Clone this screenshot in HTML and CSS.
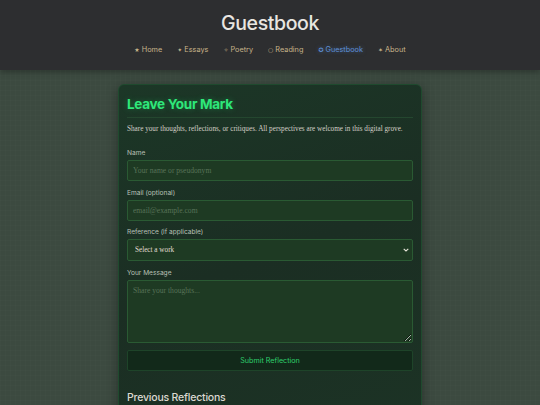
FILE: index.html
```html
<!DOCTYPE html>
<html>
<head>
<meta charset="utf-8">
<link rel="stylesheet" href="styles.css">
</head>
<body>
<header class="site-header">
  <h1 class="site-title">Guestbook</h1>
  <nav class="nav">
    <a class="nav-link"><span class="glyph">★</span> Home</a>
    <a class="nav-link"><span class="glyph">✦</span> Essays</a>
    <a class="nav-link"><span class="glyph">✧</span> Poetry</a>
    <a class="nav-link"><span class="glyph">○</span> Reading</a>
    <a class="nav-link active"><span class="glyph">✪</span> Guestbook</a>
    <a class="nav-link"><span class="glyph">✶</span> About</a>
  </nav>
</header>
<main class="main">
  <section class="card">
    <h2 class="card-title">Leave Your Mark</h2>
    <p class="intro">Share your thoughts, reflections, or critiques. All perspectives are welcome in this digital grove.</p>
    <form class="form">
      <label class="field">
        <span class="label">Name</span>
        <input class="input" type="text" placeholder="Your name or pseudonym">
      </label>
      <label class="field">
        <span class="label">Email (optional)</span>
        <input class="input" type="text" placeholder="email@example.com">
      </label>
      <label class="field">
        <span class="label">Reference (if applicable)</span>
        <span class="select-wrap">
          <select class="input select"><option>Select a work</option></select>
          <svg class="select-arrow" width="6" height="4" viewBox="0 0 6 4"><path d="M0.7 0.8 L3 3 L5.3 0.8" fill="none" stroke="#e6e3d8" stroke-width="1.1"/></svg>
        </span>
      </label>
      <label class="field">
        <span class="label">Your Message</span>
        <textarea class="input textarea" placeholder="Share your thoughts..."></textarea>
      </label>
      <button class="submit" type="button">Submit Reflection</button>
    </form>
    <h2 class="prev-title">Previous Reflections</h2>
  </section>
</main>
</body>
</html>
```

FILE: styles.css
```css
html, body {
  margin: 0;
  padding: 0;
}
body {
  width: 540px;
  height: 405px;
  overflow: hidden;
  font-family: "Inter", "DejaVu Sans", sans-serif;
  background-color: #3c4a40;
  background-image:
    linear-gradient(rgba(255,255,255,0.012) 1px, transparent 1px),
    linear-gradient(90deg, rgba(255,255,255,0.012) 1px, transparent 1px);
  background-size: 5px 5px;
}
.site-header {
  background: #2d2e30;
  height: 70px;
  box-sizing: border-box;
  padding-top: 10px;
  text-align: center;
  box-shadow: 0 2px 6px rgba(0,0,0,0.3);
}
.site-title {
  margin: 0;
  font-size: 19.5px;
  font-weight: 500;
  color: #e8e6e1;
  letter-spacing: -0.4px;
  line-height: 26px;
}
.nav {
  display: flex;
  justify-content: center;
  gap: 15px;
  margin-top: 9px;
}
.nav-link {
  font-size: 7.3px;
  color: #c8b48a;
  line-height: 10px;
}
.glyph {
  font-family: "DejaVu Sans", sans-serif;
  font-size: 6px;
}
.nav-link.active {
  color: #5d8fd6;
  text-shadow: 0 0 4px rgba(93,143,214,0.5);
}
.main {
  display: flex;
  justify-content: center;
  padding-top: 14px;
}
.card {
  width: 304px;
  box-sizing: border-box;
  padding: 10px 8px 20px 8px;
  border-radius: 6px;
  background: linear-gradient(160deg, #1c3727 0%, #1b2e23 50%, #1c3325 100%);
  border: 1px solid #1f4a2e;
  box-shadow: 0 3px 12px rgba(0,0,0,0.35);
}
.card-title {
  margin: 0;
  font-size: 13.5px;
  font-weight: 700;
  color: #2ee87a;
  letter-spacing: -0.3px;
  line-height: 18px;
  padding-bottom: 4px;
  border-bottom: 1px solid #24472f;
  text-shadow: 0 0 6px rgba(46,232,122,0.3);
}
.intro {
  margin: 6px 0 0 0;
  font-family: "Liberation Serif", serif;
  font-size: 7.2px;
  color: #d4d0c6;
  line-height: 10px;
}
.form {
  display: flex;
  flex-direction: column;
  margin-top: 15px;
}
.field {
  display: flex;
  flex-direction: column;
  margin-bottom: 7.5px;
}
.label {
  font-size: 6.6px;
  color: #b9c0b6;
  line-height: 9px;
  margin-bottom: 2px;
}
.input {
  box-sizing: border-box;
  height: 21px;
  width: 100%;
  background: #1e3a23;
  border: 1px solid #2a5a33;
  border-radius: 2px;
  padding: 0 5px;
  font-family: "Liberation Serif", serif;
  font-size: 7.6px;
  color: #d7d4c8;
  outline: none;
}
.input::placeholder {
  color: #587258;
}
.select-wrap {
  position: relative;
  display: block;
}
.select {
  display: block;
  height: 22px;
  color: #e0ddd2;
  padding-left: 7px;
  font-size: 7.2px;
  appearance: none;
  -webkit-appearance: none;
}
.select-arrow {
  position: absolute;
  right: 4px;
  top: 9px;
}
.textarea {
  display: block;
  height: 63px;
  padding-top: 5px;
  resize: vertical;
}
.submit {
  margin-top: -0.5px;
  height: 21px;
  background: #12291a;
  border: 1px solid #1e4429;
  border-radius: 2px;
  color: #2ecf6c;
  font-family: "Inter", "DejaVu Sans", sans-serif;
  font-size: 7.2px;
}
.prev-title {
  margin: 20px 0 0 0;
  font-size: 10.5px;
  font-weight: 500;
  color: #dcd9d1;
  letter-spacing: -0.2px;
  line-height: 14px;
}
```
